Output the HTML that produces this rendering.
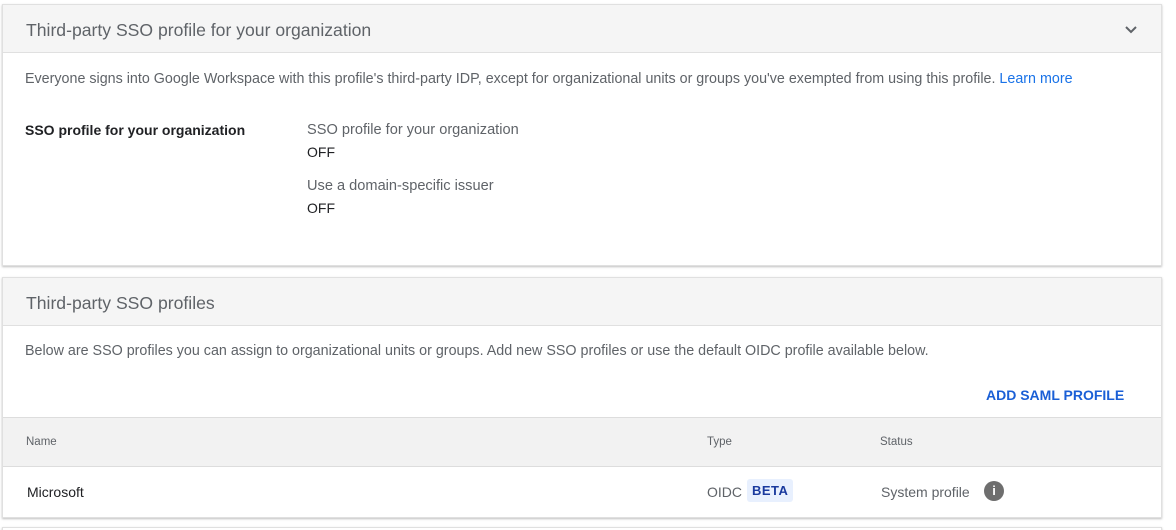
<!DOCTYPE html>
<html><head><style>
html,body{margin:0;overflow:hidden}
body{background:#fff;font-family:"Liberation Sans",sans-serif;width:1176px;height:530px;position:relative}
.card{position:absolute;left:2px;width:1160px;background:#fff;border:1px solid #e0e0e0;box-shadow:0 1px 2px rgba(0,0,0,.25);box-sizing:border-box}
.hdr{height:48px;background:#f5f5f5;border-bottom:1px solid #e0e0e0;box-sizing:border-box;position:relative}
.hdr span{position:absolute;left:23px;top:15px;font-size:17.6px;color:#5f6368}
.t{position:absolute;font-size:14.3px;white-space:nowrap}
</style></head><body>
<div class="card" style="top:4px;height:262px">
 <div class="hdr"><span>Third-party SSO profile for your organization</span>
 <svg style="position:absolute;left:1121px;top:20px" width="14" height="10" viewBox="0 0 14 10"><path d="M2 2 L7 7 L12 2" stroke="#5f6368" stroke-width="2" fill="none"/></svg></div>
 <div class="t" style="left:22px;top:66px;color:#5f6368">Everyone signs into Google Workspace with this profile's third-party IDP, except for organizational units or groups you've exempted from using this profile. <span style="color:#1a73e8">Learn more</span></div>
 <div class="t" style="left:22px;top:117px;color:#202124;font-weight:bold;font-size:14px">SSO profile for your organization</div>
 <div class="t" style="left:304px;top:117px;color:#5f6368;font-size:14.6px">SSO profile for your organization</div>
 <div class="t" style="left:304px;top:139px;color:#202124;font-size:14px">OFF</div>
 <div class="t" style="left:304px;top:173px;color:#5f6368;font-size:14.6px">Use a domain-specific issuer</div>
 <div class="t" style="left:304px;top:195px;color:#202124;font-size:14px">OFF</div>
</div>
<div class="card" style="top:277px;height:241px">
 <div class="hdr"><span>Third-party SSO profiles</span></div>
 <div class="t" style="left:22px;top:65px;color:#5f6368">Below are SSO profiles you can assign to organizational units or groups. Add new SSO profiles or use the default OIDC profile available below.</div>
 <div class="t" style="left:983px;top:109px;color:#1a5fd6;font-size:14px;font-weight:bold">ADD SAML PROFILE</div>
 <div style="position:absolute;left:0;top:139px;width:1158px;height:50px;background:#f2f2f2;border-top:1px solid #ddd;border-bottom:1px solid #ddd;box-sizing:border-box"></div>
 <div class="t" style="left:23px;top:158px;color:#5f6368;font-size:11.5px">Name</div>
 <div class="t" style="left:704px;top:158px;color:#5f6368;font-size:11.5px">Type</div>
 <div class="t" style="left:877px;top:158px;color:#5f6368;font-size:11.5px">Status</div>
 <div class="t" style="left:24px;top:206px;color:#202124;font-size:14px">Microsoft</div>
 <div class="t" style="left:704px;top:206px;color:#5f6368;font-size:14px">OIDC</div>
 <div class="t" style="left:744px;top:201px;background:#e8f0fe;color:#1a3a9e;font-weight:bold;font-size:13px;padding:4px 5px;border-radius:3px;letter-spacing:.5px">BETA</div>
 <div class="t" style="left:878px;top:206px;color:#5f6368;font-size:14px">System profile</div>
 <div style="position:absolute;left:981px;top:203px;width:20px;height:20px;border-radius:50%;background:#6e6e6e;color:#fff;font-size:13px;font-weight:bold;text-align:center;line-height:20px">i</div>
</div>
<div class="card" style="top:527px;height:20px"></div>
</body></html>
